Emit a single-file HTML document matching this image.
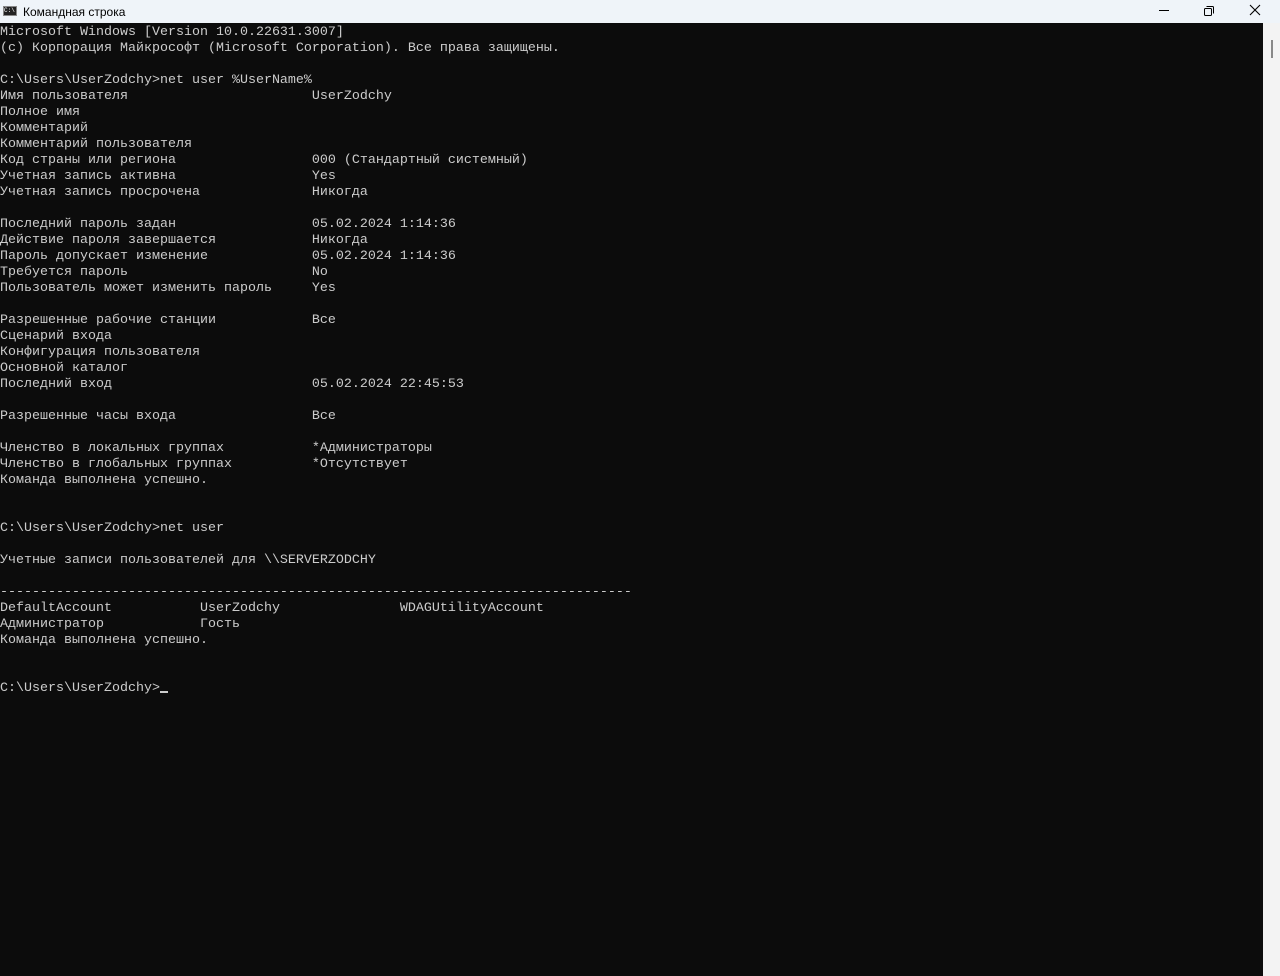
<!DOCTYPE html>
<html><head><meta charset="utf-8"><style>
html,body{margin:0;padding:0;width:1280px;height:976px;overflow:hidden;background:#0c0c0c}
#tb{position:absolute;left:0;top:0;width:1280px;height:23px;background:#eff4f9;font-family:"Liberation Sans",sans-serif;font-size:12px;color:#000}
#tb .t{position:absolute;left:23px;top:5px}
#tb .ic{position:absolute;left:3px;top:6px;width:14px;height:10px;background:#222;border:1px solid #888;box-sizing:border-box;color:#fff;font-size:6px;line-height:8px;font-family:"Liberation Mono",monospace}
#sb{position:absolute;left:1263px;top:23px;width:17px;height:953px;background:#f3f3f3}
#sb .th{position:absolute;left:8px;top:17px;width:2px;height:18px;background:#888}
pre{position:absolute;left:0;top:25px;margin:0;font-family:"Liberation Mono",monospace;font-size:13.33px;line-height:16px;color:#cccccc}
.cur{display:inline-block;width:8px;height:2px;background:#ccc;vertical-align:-2px}
</style></head><body>
<div id="tb"><div class="ic">C:\</div><span class="t">Командная строка</span>
<svg style="position:absolute;left:1157px;top:5px" width="14" height="14"><line x1="2" y1="5.5" x2="12" y2="5.5" stroke="#000" stroke-width="1"/></svg>
<svg style="position:absolute;left:1202px;top:4px" width="14" height="14"><rect x="2.5" y="4.5" width="7" height="7" rx="1" fill="none" stroke="#000"/><path d="M4.5 2.5h6a1 1 0 0 1 1 1v6" fill="none" stroke="#000"/></svg>
<svg style="position:absolute;left:1248px;top:3px" width="14" height="14"><path d="M2 2L12 12M12 2L2 12" stroke="#000" stroke-width="1.1"/></svg>
</div>
<div id="sb"><div class="th"></div></div>
<pre>Microsoft Windows [Version 10.0.22631.3007]
(c) Корпорация Майкрософт (Microsoft Corporation). Все права защищены.

C:\Users\UserZodchy&gt;net user %UserName%
Имя пользователя                       UserZodchy
Полное имя
Комментарий
Комментарий пользователя
Код страны или региона                 000 (Стандартный системный)
Учетная запись активна                 Yes
Учетная запись просрочена              Никогда

Последний пароль задан                 05.02.2024 1:14:36
Действие пароля завершается            Никогда
Пароль допускает изменение             05.02.2024 1:14:36
Требуется пароль                       No
Пользователь может изменить пароль     Yes

Разрешенные рабочие станции            Все
Сценарий входа
Конфигурация пользователя
Основной каталог
Последний вход                         05.02.2024 22:45:53

Разрешенные часы входа                 Все

Членство в локальных группах           *Администраторы
Членство в глобальных группах          *Отсутствует
Команда выполнена успешно.


C:\Users\UserZodchy&gt;net user

Учетные записи пользователей для \\SERVERZODCHY

-------------------------------------------------------------------------------
DefaultAccount           UserZodchy               WDAGUtilityAccount
Администратор            Гость
Команда выполнена успешно.


C:\Users\UserZodchy&gt;<span class="cur"></span></pre>
</body></html>
